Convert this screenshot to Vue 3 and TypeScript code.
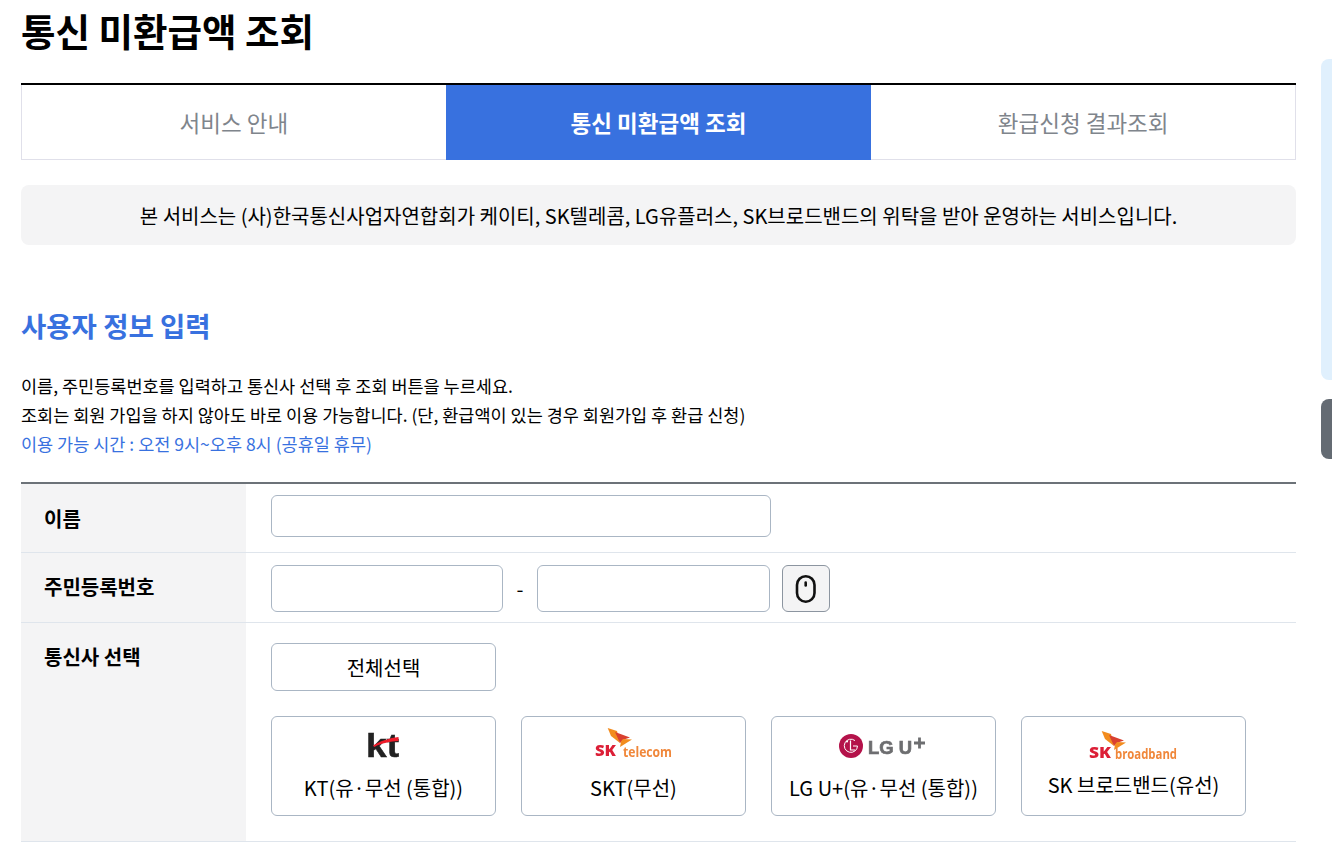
<script setup lang="ts">
const tabs = [
  { label: '서비스 안내', active: false },
  { label: '통신 미환급액 조회', active: true },
  { label: '환급신청 결과조회', active: false },
]
</script>

<template>
  <div class="page">
    <h1 class="title">통신 미환급액 조회</h1>
    <ul class="tabs">
      <li v-for="t in tabs" :key="t.label" class="tab" :class="{ active: t.active }">{{ t.label }}</li>
    </ul>
    <p class="notice">본 서비스는 (사)한국통신사업자연합회가 케이티, SK텔레콤, LG유플러스, SK브로드밴드의 위탁을 받아 운영하는 서비스입니다.</p>
    <h2 class="section">사용자 정보 입력</h2>
    <div class="guide">
      <p>이름, 주민등록번호를 입력하고 통신사 선택 후 조회 버튼을 누르세요.</p>
      <p>조회는 회원 가입을 하지 않아도 바로 이용 가능합니다. (단, 환급액이 있는 경우 회원가입 후 환급 신청)</p>
      <p class="blue">이용 가능 시간 : 오전 9시~오후 8시 (공휴일 휴무)</p>
    </div>
    <div class="form">
      <div class="row r1">
        <div class="th">이름</div>
        <div class="td"><div class="input name"></div></div>
      </div>
      <div class="row r2">
        <div class="th">주민등록번호</div>
        <div class="td rrn">
          <div class="input half"></div>
          <span class="dash">-</span>
          <div class="input half2"></div>
          <button class="mouse" type="button" aria-label="마우스 입력">
            <svg width="22" height="30" viewBox="0 0 22 30" fill="none" stroke="#111" stroke-width="2.6">
              <rect x="2" y="2.2" width="17.5" height="25.5" rx="8.75" />
              <path d="M10.7 8.5v3" stroke-linecap="round" />
            </svg>
          </button>
        </div>
      </div>
      <div class="row r3">
        <div class="th">통신사 선택</div>
        <div class="td carriers">
          <button class="all" type="button">전체선택</button>
          <div class="cards">
            <div class="card">
              <svg class="logo" width="41" height="41" viewBox="0 0 41 41">
                <text x="3" y="30" font-family="Liberation Sans" font-weight="700" font-size="33" textLength="33" lengthAdjust="spacingAndGlyphs" fill="#222" stroke="#222" stroke-width=".5">kt</text>
                <path d="M10 18.5 C17 14 27 11 35.5 10 V14 C28 14.4 18 16 11.5 20Z" fill="#ee1c2a" />
              </svg>
              <span>KT(유·무선 (통합))</span>
            </div>
            <div class="card">
              <svg class="logo" width="101" height="41" viewBox="-8 0 101 41">
                <path d="M16.7 1 L26 4 L29 16 L20 9Z" fill="#f28c1e" />
                <path d="M24 5 L39 10.5 L33 12.5 L29 16Z" fill="#d9402f" />
                <path d="M32 12 L41 12.5 L29 20 L30 14.5Z" fill="#f28c1e" />
                <text x="4" y="29" font-family="Open Sans" font-weight="800" font-size="15.5" textLength="21" lengthAdjust="spacingAndGlyphs" fill="#dc1f37">SK</text>
                <text x="32" y="30" font-family="Open Sans" font-weight="700" font-size="14.5" textLength="49" lengthAdjust="spacingAndGlyphs" fill="#f0873a">telecom</text>
              </svg>
              <span>SKT(무선)</span>
            </div>
            <div class="card">
              <svg class="logo" width="91" height="41" viewBox="0 0 91 41">
                <circle cx="13" cy="19" r="12" fill="#b4124a" />
                <path d="M19.5 19 A6.6 6.6 0 1 1 17 13.6" fill="none" stroke="#fff" stroke-width="1" />
                <path d="M12.5 13.5 V23 H17 M15 19 H19.5" fill="none" stroke="#fff" stroke-width="1.2" />
                <circle cx="9" cy="14.5" r="1.1" fill="#fff" />
                <text x="30" y="27" font-family="Liberation Sans" font-weight="700" font-size="18.5" textLength="44" lengthAdjust="spacingAndGlyphs" fill="#6d6e70" stroke="#6d6e70" stroke-width=".7">LG U</text>
                <path d="M81.5 10.5 V21.5 M76 16 H87" stroke="#6d6e70" stroke-width="2.8" />
              </svg>
              <span>LG U+(유·무선 (통합))</span>
            </div>
            <div class="card sb">
              <svg class="logo" width="125" height="41" viewBox="-16 0 125 41">
                <g transform="translate(-2 3)">
                  <path d="M16.7 1 L26 4 L29 16 L20 9Z" fill="#f28c1e" />
                  <path d="M24 5 L39 10.5 L33 12.5 L29 16Z" fill="#d9402f" />
                  <path d="M32 12 L41 12.5 L29 20 L30 14.5Z" fill="#f28c1e" />
                </g>
                <text x="2" y="31" font-family="Open Sans" font-weight="800" font-size="15.5" textLength="22" lengthAdjust="spacingAndGlyphs" fill="#dc1f37">SK</text>
                <text x="28" y="32" font-family="Open Sans" font-weight="700" font-size="14" textLength="62" lengthAdjust="spacingAndGlyphs" fill="#f0873a">broadband</text>
              </svg>
              <span>SK 브로드밴드(유선)</span>
            </div>
          </div>
        </div>
      </div>
    </div>
    <div class="side light"></div>
    <div class="side dark"></div>
  </div>
</template>

<style>
html, body { margin: 0; overflow: hidden; height: 100%; background: #fff; }
</style>

<style scoped>
.page {
  position: relative;
  box-sizing: border-box;
  width: 1332px;
  height: 849px;
  overflow: hidden;
  padding: 0 36px 0 21px;
  font-family: "Noto Sans CJK KR", "Noto Sans", sans-serif;
  color: #000;
}
.title {
  margin: 0;
  height: 83px;
  padding-top: 4px;
  box-sizing: border-box;
  font-size: 37.5px;
  line-height: 52px;
  font-weight: 700;
}
.tabs {
  display: flex;
  margin: 0;
  padding: 0;
  list-style: none;
  border-top: 2px solid #000;
}
.tab {
  flex: 1;
  height: 75px;
  box-sizing: border-box;
  display: flex;
  align-items: center;
  justify-content: center;
  border: 1px solid #e0e0ea;
  border-top: 0;
  font-size: 22.5px;
  color: #7f858c;
}
.tab:first-child { border-right: 0; }
.tab:last-child { border-left: 0; }
.tab.active {
  background: #3871df;
  border-color: #3871df;
  color: #fff;
  font-weight: 700;
}
.notice {
  margin: 25px 0 0;
  height: 60px;
  display: flex;
  align-items: center;
  justify-content: center;
  background: #f4f4f5;
  border-radius: 8px;
  font-size: 20px;
}
.section {
  margin: 57px 0 0;
  font-size: 27.5px;
  line-height: 46px;
  font-weight: 700;
  color: #3871df;
}
.guide {
  margin-top: 23px;
  font-size: 17.5px;
  line-height: 29px;
}
.guide p { margin: 0; }
.guide .blue { color: #3871df; }
.form {
  margin-top: 24px;
  border-top: 2px solid #6c7278;
}
.row {
  display: flex;
  box-sizing: border-box;
  border-bottom: 1px solid #dfe5ec;
}
.r1 { height: 69px; }
.r2 { height: 70px; }
.r3 { height: 219px; }
.th {
  flex: 0 0 225px;
  box-sizing: border-box;
  padding: 18px 0 0 23px;
  background: #f4f4f5;
  font-size: 20px;
  line-height: 32px;
  font-weight: 700;
}
.r1 .th { padding-top: 19px; }
.td {
  flex: 1;
  padding: 12px 0 0 25px;
}
.r1 .td { padding-top: 11px; }
.input {
  box-sizing: border-box;
  height: 47px;
  border: 1px solid #aab6c4;
  border-radius: 6px;
  background: #fff;
}
.input.name { width: 500px; height: 42px; }
.rrn { display: flex; }
.half { width: 232px; }
.half2 { width: 233px; }
.dash { width: 34px; text-align: center; line-height: 47px; font-size: 20px; }
.mouse {
  margin-left: 12px;
  width: 48px;
  height: 47px;
  padding: 0;
  display: flex;
  align-items: center;
  justify-content: center;
  background: #f4f4f5;
  border: 1px solid #8c95a0;
  border-radius: 6px;
}
.carriers { padding-top: 20px; }
.all {
  display: block;
  box-sizing: border-box;
  width: 225px;
  height: 48px;
  background: #fff;
  border: 1px solid #aab6c4;
  border-radius: 6px;
  font: inherit;
  font-size: 20px;
  color: #000;
}
.cards {
  display: flex;
  gap: 25px;
  margin-top: 25px;
}
.card {
  box-sizing: border-box;
  width: 225px;
  height: 100px;
  display: flex;
  flex-direction: column;
  align-items: center;
  border: 1px solid #aab6c4;
  border-radius: 6px;
  font-size: 20px;
  line-height: 28px;
  padding-top: 10px;
}
.logo { display: block; filter: blur(0.35px); }
.card span { margin-top: 6px; }
.card.sb span { margin-top: 3px; }
.side {
  position: absolute;
  left: 1321px;
  width: 40px;
  border-radius: 8px;
}
.light { top: 59px; height: 321px; background: #e0f0fd; }
.dark { top: 399px; height: 60px; background: #646b73; }
</style>
